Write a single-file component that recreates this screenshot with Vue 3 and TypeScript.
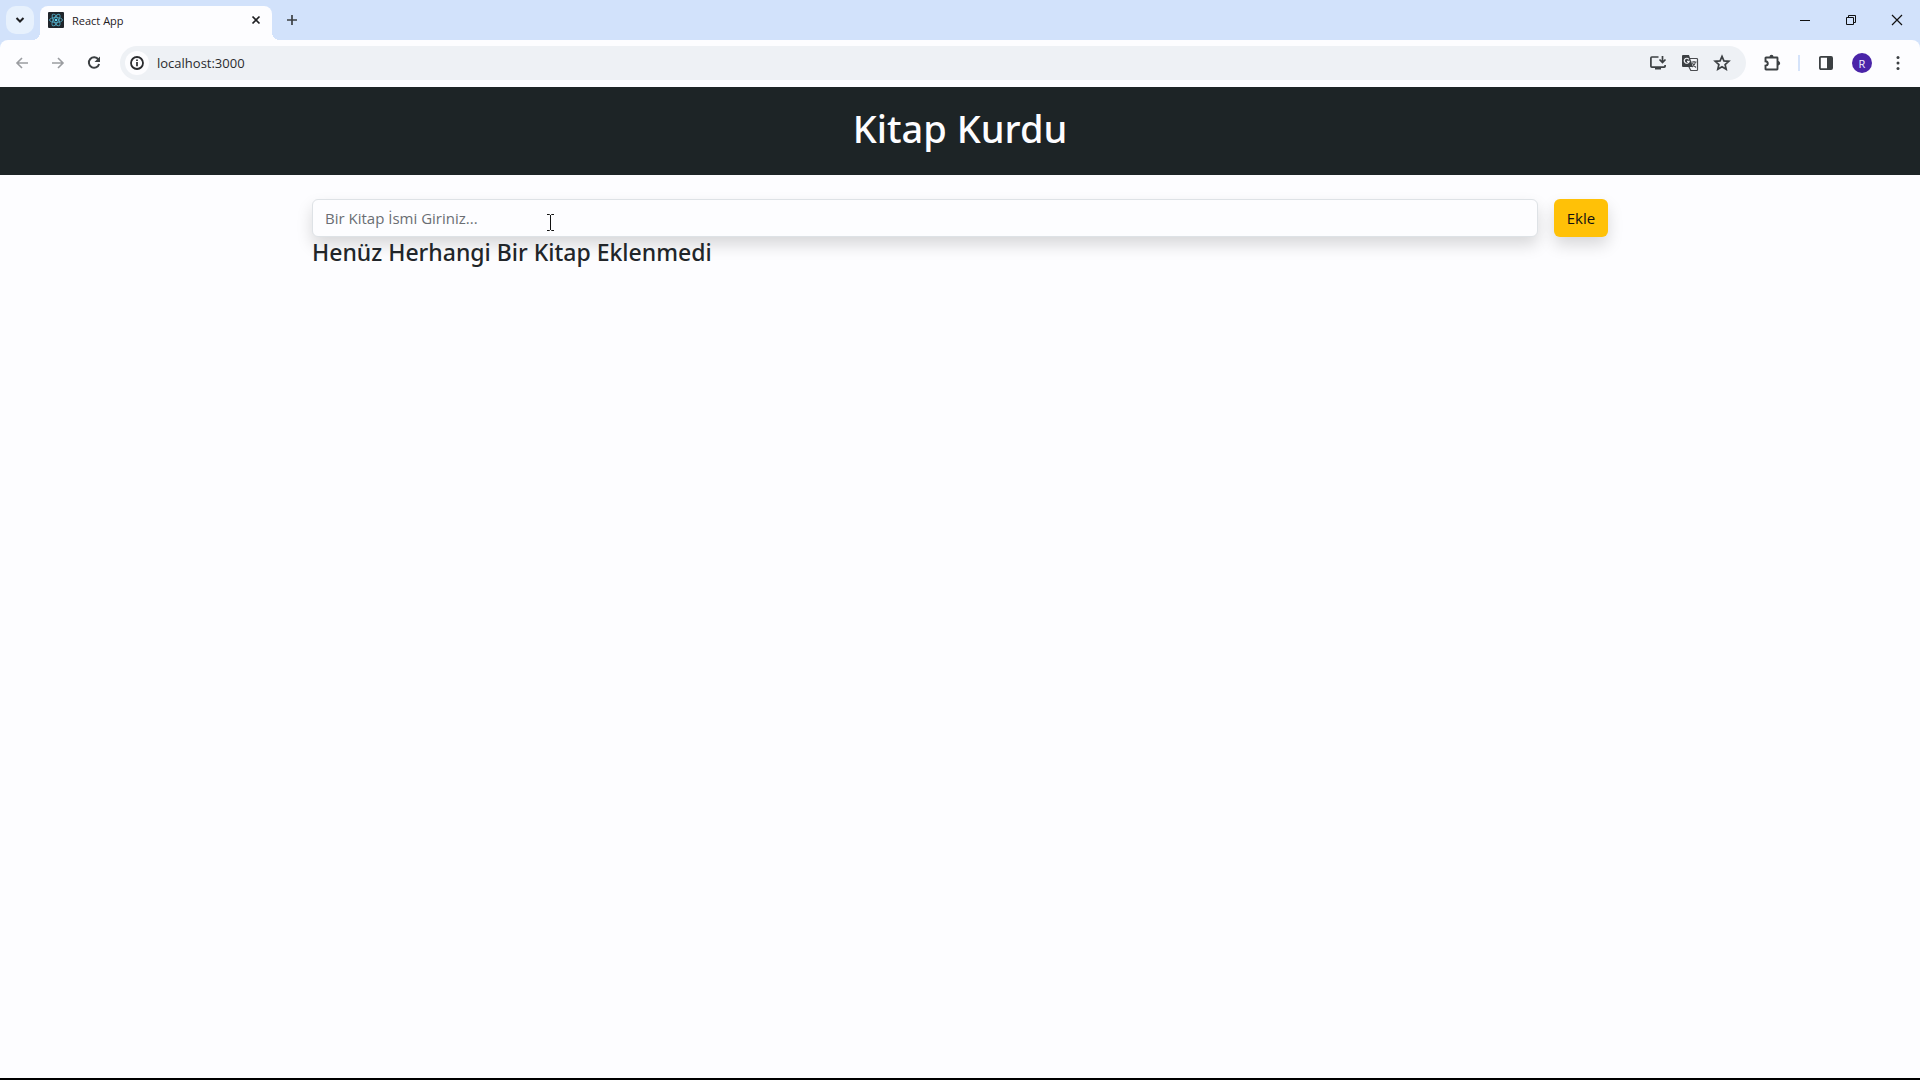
<script setup lang="ts">
import { ref } from 'vue'

const address = ref('localhost:3000')
const title = ref('')
const books = ref<string[]>([])

function addBook() {
  const name = title.value.trim()
  if (!name) return
  books.value.push(name)
  title.value = ''
}
</script>

<template>
  <div class="window">
    <div class="tab-strip">
      <button class="tab-search" type="button" aria-label="Search tabs">
        <svg width="10" height="10" viewBox="0 0 10 10"><path d="M1.5 3 5 6.5 8.500 3" fill="none" stroke="#1f2023" stroke-width="2" /></svg>
      </button>
      <div class="tab">
        <svg class="favicon" width="16" height="16" viewBox="0 0 16 16">
          <rect width="16" height="16" rx="1" fill="#20252b" />
          <g fill="none" stroke="#4fa6bf" stroke-width="0.9">
            <ellipse cx="8" cy="8" rx="6.500" ry="2.500" />
            <ellipse cx="8" cy="8" rx="6.500" ry="2.500" transform="rotate(60 8 8)" />
            <ellipse cx="8" cy="8" rx="6.500" ry="2.500" transform="rotate(120 8 8)" />
          </g>
          <circle cx="8" cy="8" r="1.300" fill="#61dafb" />
        </svg>
        <span class="tab-title">React App</span>
        <button class="tab-close" type="button" aria-label="Close tab">
          <svg width="16" height="16" viewBox="0 0 16 16"><path d="m4.500 4.500 7 7m0-7-7 7" stroke="#1f2023" stroke-width="1.700" /></svg>
        </button>
      </div>
      <button class="new-tab" type="button" aria-label="New tab">
        <svg width="16" height="16" viewBox="0 0 16 16"><path d="M3 8h10M8 3v10" stroke="#3c4043" stroke-width="1.700" /></svg>
      </button>
      <div class="window-controls">
        <button type="button" aria-label="Minimize">
          <svg width="12" height="12" viewBox="0 0 12 12"><path d="M1 6.500h10" stroke="#111" /></svg>
        </button>
        <button type="button" aria-label="Restore">
          <svg width="12" height="12" viewBox="0 0 12 12"><path d="M1.500 3.500h7v7h-7zM3.500 3.500v-2h7v7h-2" fill="none" stroke="#111" /></svg>
        </button>
        <button type="button" aria-label="Close">
          <svg width="12" height="12" viewBox="0 0 12 12"><path d="m1 1 10 10M11 1 1 11" stroke="#111" stroke-width="1.200" /></svg>
        </button>
      </div>
    </div>

    <div class="toolbar-back">
      <div class="toolbar">
        <nav class="nav-buttons">
          <button type="button" aria-label="Back">
            <svg width="16" height="16" viewBox="0 0 16 16"><path d="M14 8H3m5-5L3 8l5 5" fill="none" stroke="#9b9da1" stroke-width="1.600" /></svg>
          </button>
          <button type="button" aria-label="Forward">
            <svg width="16" height="16" viewBox="0 0 16 16"><path d="M2 8h11M8 3l5 5-5 5" fill="none" stroke="#9b9da1" stroke-width="1.600" /></svg>
          </button>
          <button type="button" aria-label="Reload">
            <svg width="16" height="16" viewBox="0 0 16 16">
              <path d="M12.400 4.600A5.200 5.200 0 1 0 13.100 9" fill="none" stroke="#3c4043" stroke-width="2" />
              <path d="M14 1.500V7H8.500z" fill="#3c4043" />
            </svg>
          </button>
        </nav>
        <div class="omnibox">
          <button class="site-info" type="button" aria-label="Site information">
            <svg width="16" height="16" viewBox="0 0 16 16">
              <circle cx="8" cy="8" r="6" fill="none" stroke="#2a2b2e" stroke-width="1.800" />
              <path d="M8 7v4.300M8 4.500v1.500" stroke="#2a2b2e" stroke-width="1.700" />
            </svg>
          </button>
          <input v-model="address" class="address" type="text" aria-label="Address" spellcheck="false" />
          <button class="page-action" type="button" aria-label="Install app">
            <svg width="18" height="18" viewBox="0 0 18 18">
              <path d="M9.500 3H2.800Q1.900 3 1.900 4v8.200q0 .9.900.9h12.400q.9 0 .9-.9V11" fill="none" stroke="#3c4043" stroke-width="1.700" />
              <path d="M6 13h6v2.500H6z" fill="#3c4043" />
              <path d="M13.500 2v6.500m-3-3 3 3 3-3" fill="none" stroke="#3c4043" stroke-width="1.700" />
            </svg>
          </button>
          <button class="page-action" type="button" aria-label="Translate page">
            <svg width="18" height="18" viewBox="0 0 18 18">
              <path d="M7.500 4.500h8.200q.8 0 .8.800v10.400q0 .8-.8.800H9.800l-2-4" fill="#f3f5f9" stroke="#4a4c50" stroke-width="1.200" />
              <path d="M2 1h6l4 12H2q-1 0-1-1V2q0-1 1-1z" fill="#3c4043" />
              <path d="M7.800 5.300A2.500 2.500 0 1 0 8.200 7.300H6" fill="none" stroke="#f3f5f9" stroke-width="1.200" />
              <path d="M10.500 8h5M13 7v1m1.500 0q-.5 3-3.500 5m.5-4q1 3 3.500 4.500" fill="none" stroke="#4a4c50" stroke-width="1.100" />
            </svg>
          </button>
          <button class="page-action" type="button" aria-label="Bookmark this tab">
            <svg width="18" height="18" viewBox="0 0 18 18"><path d="m9 2.400 1.900 4.500 4.900.4-3.700 3.200 1.100 4.800L9 12.800l-4.200 2.500 1.100-4.800-3.700-3.200 4.900-.4z" fill="none" stroke="#3c4043" stroke-width="1.700" /></svg>
          </button>
        </div>
        <div class="browser-actions">
          <button type="button" aria-label="Extensions">
            <svg width="18" height="18" viewBox="0 0 18 18">
              <path d="M3 3.500h11q.5 0 .5.500v11q0 .5-.5.500H3q-.5 0-.5-.5v-3.300q2.300-.3 2.300-2.200T2.500 7.300V4q0-.5.500-.5z" fill="none" stroke="#3c4043" stroke-width="1.900" />
              <path d="M6.500 3q0-2.200 2-2.200t2 2.200zM15 7q2.200.2 2.200 2.200T15 11.400z" fill="#3c4043" />
            </svg>
          </button>
          <span class="divider"></span>
          <button type="button" aria-label="Side panel">
            <svg width="18" height="18" viewBox="0 0 18 18">
              <rect x="2.900" y="2.900" width="12.200" height="12.200" rx="1" fill="none" stroke="#3c4043" stroke-width="1.800" />
              <path d="M10 3h5v12h-5z" fill="#3c4043" />
            </svg>
          </button>
          <button class="avatar" type="button" aria-label="Profile">R</button>
          <button type="button" aria-label="Menu">
            <svg width="18" height="18" viewBox="0 0 18 18" fill="#3c4043"><circle cx="9" cy="3.500" r="1.500" /><circle cx="9" cy="9" r="1.500" /><circle cx="9" cy="14.500" r="1.500" /></svg>
          </button>
        </div>
      </div>
    </div>

    <div class="page">
      <header class="banner"><h1>Kitap Kurdu</h1></header>
      <main class="container">
        <form class="book-form" @submit.prevent="addBook">
          <div class="field">
            <input v-model="title" type="text" aria-label="Kitap ismi" placeholder="Bir Kitap İsmi Giriniz..." />
            <svg class="pointer" width="9" height="17" viewBox="0 0 9 17"><path d="M1 .5h2.500l1 1 1-1H8M4.500 1v15M1 16.500h2.500l1-1 1 1H8" fill="none" stroke="#111" /></svg>
          </div>
          <button class="add" type="submit">Ekle</button>
        </form>
        <h4 v-if="books.length === 0">Henüz Herhangi Bir Kitap Eklenmedi</h4>
        <ul v-else>
          <li v-for="(book, i) in books" :key="i">{{ book }}</li>
        </ul>
      </main>
    </div>
  </div>
</template>

<style>
body {
  margin: 0;
}
</style>

<style scoped>
.window,
.window * {
  box-sizing: border-box;
}
.window {
  display: flex;
  flex-direction: column;
  min-height: 100vh;
  background: #fdfdff;
  color: #212529;
  font-family: "Open Sans", "Noto Sans", sans-serif;
  border-bottom: 2px solid #000;
}
button {
  display: flex;
  align-items: center;
  justify-content: center;
  flex: none;
  margin: 0;
  padding: 0;
  border: 0;
  background: none;
  font-family: inherit;
}
.tab-strip {
  display: flex;
  align-items: center;
  height: 40px;
  padding-left: 6px;
  background: #d2e2fb;
}
.tab-search {
  width: 28px;
  height: 28px;
  border-radius: 10px;
  background: #e7f1fd;
}
.tab {
  position: relative;
  align-self: flex-end;
  display: flex;
  align-items: center;
  width: 232px;
  height: 34px;
  margin-left: 6px;
  padding: 0 8px 6px;
  border-radius: 8px 8px 0 0;
  background: #fdfdff;
}
.tab::before,
.tab::after {
  content: "";
  position: absolute;
  bottom: 0;
  width: 8px;
  height: 8px;
}
.tab::before {
  right: 100%;
  background: radial-gradient(circle at 0 0, transparent 8px, #fdfdff 8px);
}
.tab::after {
  left: 100%;
  background: radial-gradient(circle at 100% 0, transparent 8px, #fdfdff 8px);
}
.tab-title {
  flex: 1;
  margin-left: 8px;
  padding-top: 2px;
  font-size: 11px;
  line-height: 16px;
  color: #1f2023;
}
.new-tab {
  width: 28px;
  height: 28px;
  margin-left: 6px;
}
.window-controls {
  display: flex;
  margin-left: auto;
}
.window-controls button {
  width: 46px;
  height: 40px;
}
.toolbar-back {
  background: #d2e2fb;
}
.toolbar {
  display: flex;
  align-items: center;
  height: 47px;
  padding: 0 8px 1px;
  border-radius: 8px 8px 0 0;
  background: #fdfdff;
}
.nav-buttons {
  display: flex;
  gap: 8px;
  margin-right: 12px;
}
.nav-buttons button {
  width: 28px;
  height: 28px;
}
.omnibox {
  display: flex;
  align-items: center;
  flex: 1;
  height: 34px;
  padding: 0 10px 0 5px;
  border-radius: 17px;
  background: #eef1f5;
}
.site-info {
  width: 24px;
  height: 24px;
  border-radius: 12px;
  background: #fdfdff;
}
.address {
  flex: 1;
  min-width: 0;
  margin-left: 8px;
  padding: 0;
  border: 0;
  outline: 0;
  background: none;
  color: #2a2b2e;
  font: 13px/20px "Open Sans", "Noto Sans", sans-serif;
}
.page-action {
  width: 28px;
  height: 28px;
  margin-left: 4px;
}
.browser-actions {
  display: flex;
  align-items: center;
  margin-left: 12px;
}
.browser-actions button {
  width: 28px;
  height: 28px;
}
.divider {
  width: 2px;
  height: 16px;
  margin: 0 12px;
  background: #d5e3fa;
}
.browser-actions .avatar {
  width: 20px;
  height: 20px;
  margin: 0 12px;
  border-radius: 10px;
  background: #4a24a8;
  color: #f5f0ff;
  font-size: 11px;
}
.page {
  flex: 1;
}
.banner {
  padding: 17px 20px 23px;
  background: #1d2426;
  color: #fdfdff;
  text-align: center;
}
h1,
h4 {
  margin: 0;
  font-family: "Noto Sans", "Open Sans", sans-serif;
  font-weight: 500;
}
h1 {
  font-size: 38px;
  line-height: 48px;
}
.container {
  max-width: 1320px;
  margin: 24px auto 0;
  padding: 0 12px;
}
.book-form {
  display: flex;
  gap: 16px;
}
.field {
  position: relative;
  flex: 1;
}
.field input {
  display: block;
  width: 100%;
  height: 38px;
  padding: 6px 12px;
  border: 1px solid #dee2e6;
  border-radius: 6px;
  outline: 0;
  background: #fdfdff;
  box-shadow: 0 8px 16px rgba(0, 0, 0, 0.15);
  color: #212529;
  font: 15px/24px "Open Sans", "Noto Sans", sans-serif;
}
.field input::placeholder {
  color: #6a6e73;
  opacity: 1;
}
.pointer {
  position: absolute;
  top: 15px;
  left: 234px;
}
.add {
  width: 54px;
  height: 38px;
  border-radius: 6px;
  background: #ffc107;
  box-shadow: 0 8px 16px rgba(0, 0, 0, 0.15);
  color: #111;
  font-size: 15px;
}
h4 {
  position: relative;
  font-size: 23px;
  line-height: 30px;
}
ul {
  margin: 16px 0;
}
</style>
